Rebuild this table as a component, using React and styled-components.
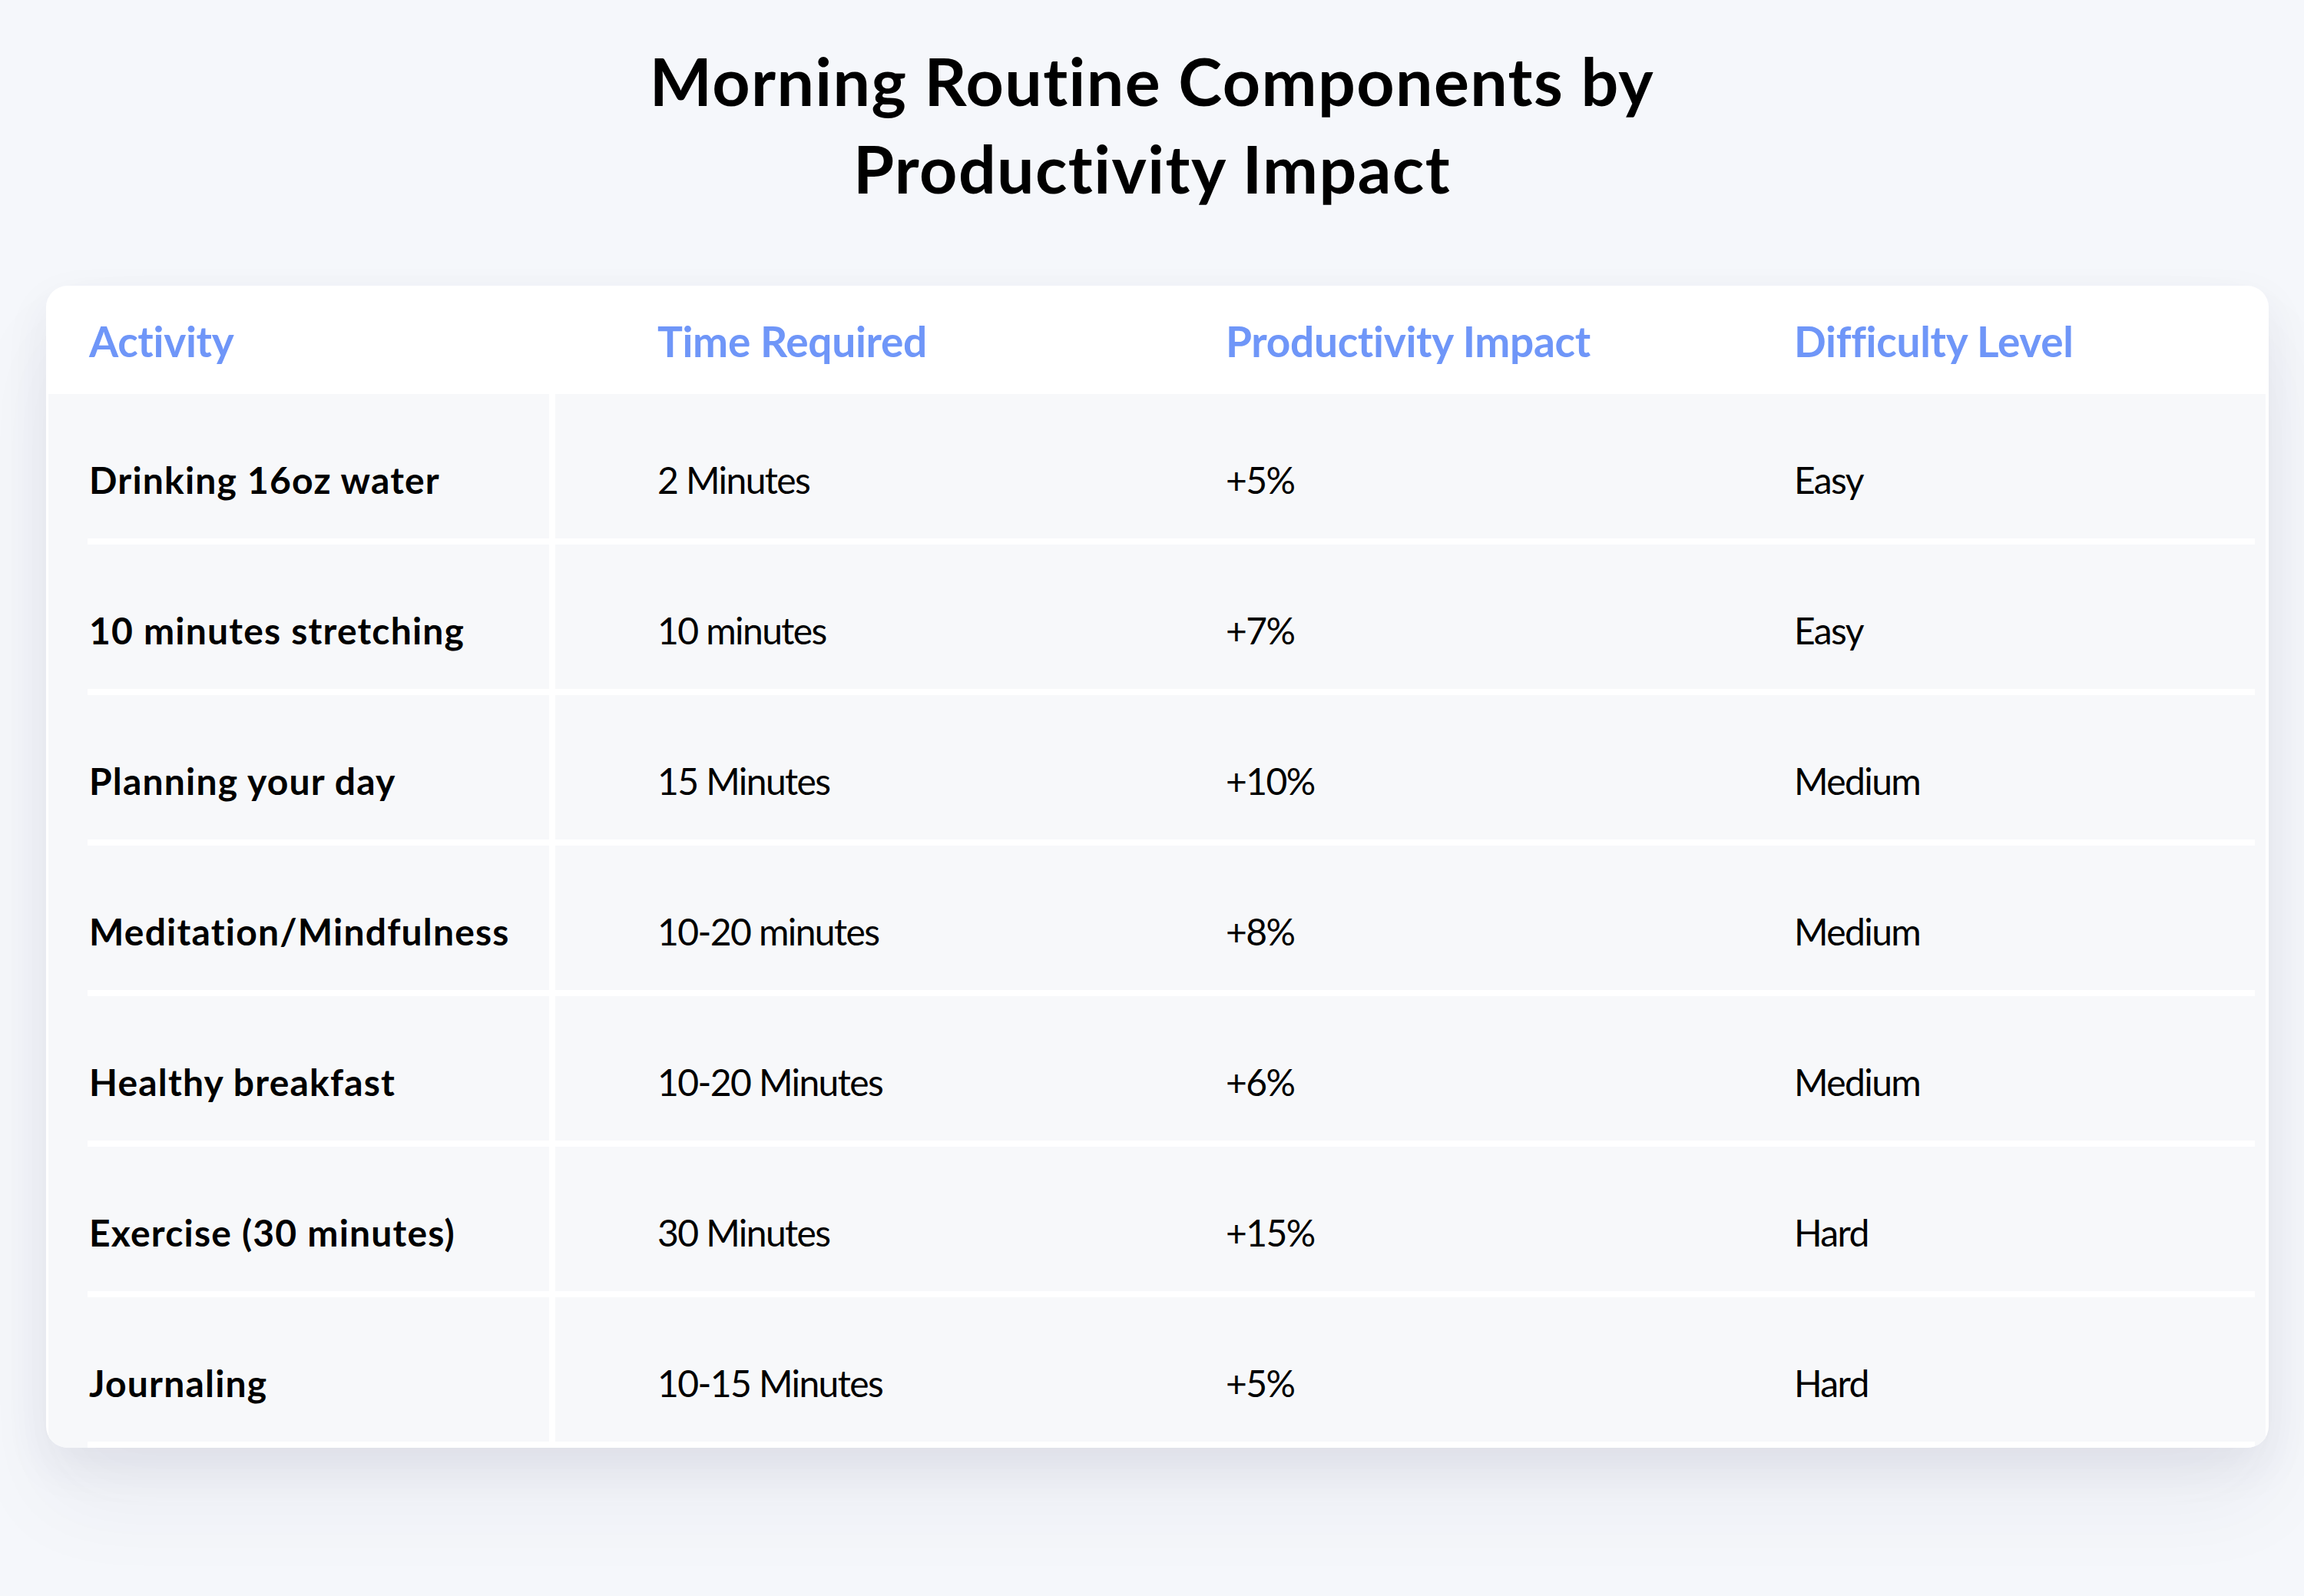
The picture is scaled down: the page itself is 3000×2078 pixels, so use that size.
import React from 'react';
import styled, { createGlobalStyle } from 'styled-components';

const GlobalStyle = createGlobalStyle`
  html, body {
    margin: 0;
    padding: 0;
    background: #f5f7fb;
  }
  body {
    font-family: Lato, "Open Sans", "Liberation Sans", sans-serif;
    color: #000;
    min-height: 100vh;
  }
`

const Page = styled.div`
  padding-top: 48px;
  padding-bottom: 192px;
`

const Title = styled.h1`
  margin: 0 0 96px;
  font-size: 86px;
  line-height: 114px;
  font-weight: 700;
  letter-spacing: 1.4px;
  text-align: center;
  color: #000;
`

const Card = styled.div`
  margin: 0 46px 0 60px;
  padding: 0 4px 0 3px;
  background: #fff;
  border-radius: 28px;
  overflow: hidden;
  box-shadow: 0 24px 60px rgba(40, 48, 80, 0.07), 0 70px 120px rgba(40, 48, 80, 0.05);
`

const HeadRow = styled.div`
  display: grid;
  grid-template-columns: 652px 8px 740px 740px 1fr;
  height: 141px;
  box-sizing: border-box;
  padding-top: 39px;
`

const HeadCell = styled.div`
  padding-left: ${p => p.$pad}px;
  font-size: 55px;
  line-height: 66px;
  font-weight: 700;
  letter-spacing: -0.3px;
  color: #6f96f8;
  white-space: nowrap;
`

const Row = styled.div`
  display: grid;
  grid-template-columns: 652px 8px 740px 740px 1fr;
  background: #f7f8fa;

  &::after {
    content: '';
    grid-column: 1 / -1;
    height: 8px;
    margin: 0 14px 0 51px;
    background: #fff;
  }
`

const Cell = styled.div`
  height: 188px;
  box-sizing: border-box;
  padding: 83px 0 0 ${p => p.$pad}px;
  font-size: 48px;
  line-height: 57.6px;
  font-weight: ${p => (p.$strong ? 700 : 400)};
  letter-spacing: ${p => (p.$strong ? '1.2px' : '-1.6px')};
  color: #000;
  white-space: nowrap;
`

const Split = styled.div`
  background: #fff;
`

const columns = ['Activity', 'Time Required', 'Productivity Impact', 'Difficulty Level']

const rows = [
  ['Drinking 16oz water', '2 Minutes', '+5%', 'Easy'],
  ['10 minutes stretching', '10 minutes', '+7%', 'Easy'],
  ['Planning your day', '15 Minutes', '+10%', 'Medium'],
  ['Meditation/Mindfulness', '10-20 minutes', '+8%', 'Medium'],
  ['Healthy breakfast', '10-20 Minutes', '+6%', 'Medium'],
  ['Exercise (30 minutes)', '30 Minutes', '+15%', 'Hard'],
  ['Journaling', '10-15 Minutes', '+5%', 'Hard'],
]

const App = () => {
  return (
    <>
      <GlobalStyle />
      <Page>
        <Title>
          Morning Routine Components by
          <br />
          Productivity Impact
        </Title>
        <Card>
          <HeadRow>
            <HeadCell $pad={53}>{columns[0]}</HeadCell>
            <div />
            {columns.slice(1).map(c => (
              <HeadCell key={c} $pad={133}>{c}</HeadCell>
            ))}
          </HeadRow>
          {rows.map(([activity, ...rest]) => (
            <Row key={activity}>
              <Cell $pad={53} $strong>{activity}</Cell>
              <Split />
              {rest.map((v, i) => (
                <Cell key={i} $pad={133}>{v}</Cell>
              ))}
            </Row>
          ))}
        </Card>
      </Page>
    </>
  )
}

export default App
